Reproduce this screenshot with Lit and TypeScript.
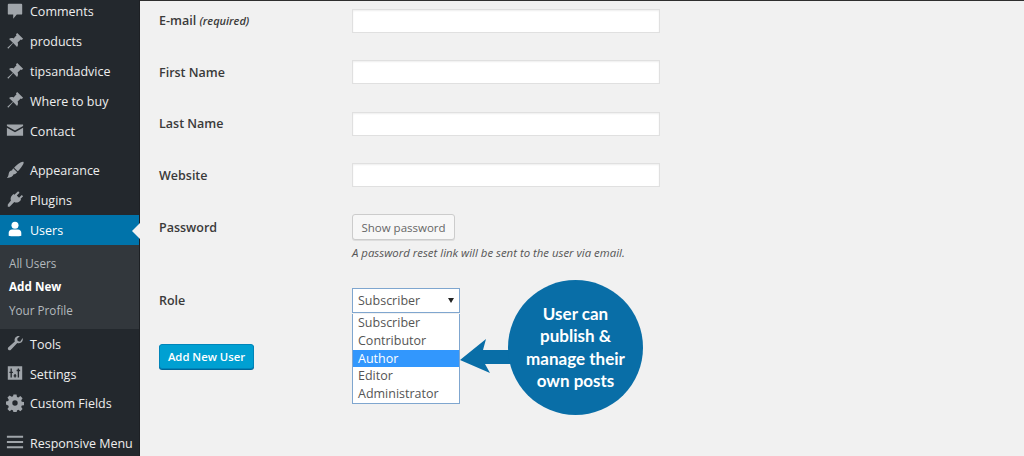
import { LitElement, html, css, svg } from "lit";
import { customElement } from "lit/decorators.js";

const pin = svg`<path d="M12.500 1l6.500 6.500-1.600 1.500-1-.7-3.500 3.300c.8 1.900.4 3.700-.6 5L8 12.300 2.500 18.500l-1-1L7.700 12 3.400 7.700c1.300-1 3.100-1.400 5-.6l3.300-3.500-.7-1z"/>`;
const icons: Record<string, unknown> = {
  comment: svg`<path d="M3 2h14a1 1 0 0 1 1 1v10a1 1 0 0 1-1 1h-5l-4 4.500V14H3a1 1 0 0 1-1-1V3a1 1 0 0 1 1-1z"/>`,
  pin,
  mail: svg`<path d="M1 4h18v1.500l-9 5-9-5z"/><path d="M1 7.500l9 5 9-5V16.500H1z"/>`,
  brush: svg`<path d="M19.500 1c.8 2-3.500 7.500-6.500 10.500L9 7.500c2.500-3.200 8.500-7.500 10.500-6.500z"/><path d="M8 8l4.500 4.500-1.500 1.500c-.8.900-1.700 1-2.500.7-.6 2-2.800 3.700-7.500 4.300 2.200-2 1.700-4.700 2.500-6.400.7-1.500 2.200-2.200 3.200-2 .2-.9.500-1.800 1.300-2.600z"/>`,
  plug: svg`<path d="M13.500 1.500l1.500 1.500-3 3 2.500 2.500 3-3 1.500 1.500-3 3 .8.800-1.300 1.300c-1.900 1.900-4.500 2.300-6.300 1.200L4 18.500H2v-2.500l3.500-4.200c-.8-1.800-.4-4.100 1.400-5.900l1.500-1.400.9.900z"/>`,
  user: svg`<circle cx="10" cy="5.800" r="3.900"/><path d="M3 17.500v-3.300c0-2 1.600-3.700 3.700-3.700h6.600c2.100 0 3.700 1.700 3.700 3.700v3.300c-2 .8-12 .8-14 0z"/>`,
  wrench: svg`<path d="M18.500 4.500c.6 2-.1 3.900-1.600 5-1.400 1-3 1.100-4.400.6L5.500 17.500c-.8.800-2.100.8-2.900 0-.8-.8-.7-2.100.1-2.900l7.100-6.300c-.5-1.400-.4-3 .6-4.400 1.100-1.500 3-2.200 5-1.600l-3 3 .6 2.600 2.700.8z"/>`,
  settings: svg`<path fill-rule="evenodd" d="M2 2.500h16v15H2zM5 5v3.500H3.800V10H5v5h1.500v-5h1.200V8.500H6.500V5zM13 5v1.500h-1.200V8H13v7h1.500V8h1.200V6.500h-1.200V5zM9.300 11v1.500H8.500V14h.8v1h1.500v-1h.7v-1.500h-.7V11z"/>`,
  gear: svg`<path fill-rule="evenodd" d="M8.300 .5h3.400l.5 2.700 1.500.6 2.300-1.500 2.400 2.400-1.500 2.300.6 1.500 2.500.5v3.400l-2.500.5-.6 1.500 1.500 2.300-2.400 2.400-2.300-1.500-1.500.6-.5 2.700H8.300l-.5-2.700-1.500-.6-2.300 1.500-2.400-2.400 1.500-2.300-.6-1.500L0 11.700V8.300l2.500-.5.6-1.500-1.500-2.300L4 1.600l2.300 1.500 1.500-.6zM10 7a3 3 0 1 0 0 6 3 3 0 0 0 0-6z"/>`,
  menu: svg`<path d="M1 3h18v2.400H1zM1 8.800h18v2.400H1zM1 14.600h18V17H1z"/>`,
};

@customElement("app-root")
export class AppRoot extends LitElement {
  static styles = css`
    :host { display: block; width: 1024px; height: 456px; overflow: hidden; font-family: "Open Sans", sans-serif; }
    .page { display: flex; width: 1024px; height: 456px; background: #f1f1f1; overflow: hidden; }
    .side { width: 139px; flex: none; background: #23282d; color: #eee; font-size: 12.500px; border-right: 1px solid #1d2024; }
    .list { margin-top: -3.500px; display: flex; flex-direction: column; }
    .item { height: 29.85px; display: flex; align-items: center; gap: 6px; padding-left: 6px; flex: none; white-space: nowrap; }
    .item svg { width: 18px; height: 18px; fill: #a0a5aa; flex: none; margin-top: -1px; }
    .item span { margin-top: 1px; }
    .sep { height: 9.500px; flex: none; }
    .active { background: #0073aa; color: #fff; position: relative; }
    .active svg { fill: #fff; }
    .active::after { content: ""; position: absolute; right: -1px; top: 8px; border: 8px solid transparent; border-right-color: #f1f1f1; border-left-width: 0; }
    .sub { background: #32373c; height: 84px; flex: none; display: flex; flex-direction: column; padding: 6px 0 0 9px; box-sizing: border-box; font-size: 11.700px; color: #b4b9be; }
    .sub div { height: 23.800px; display: flex; align-items: center; }
    .sub .cur { color: #fff; font-weight: 700; }
    .main { flex: 1; position: relative; padding: 7.200px 0 0 19px; border-top: 1px solid #2f2f2f; box-sizing: border-box; color: #3a3a3a; font-size: 12.500px; }
    .row { display: grid; grid-template-columns: 193px 308px; align-items: center; height: 25px; margin-bottom: 26.500px; font-weight: 600; }
    .row em { font-size: 11px; font-weight: 600; }
    .input { height: 24px; background: #fff; border: 1px solid #e0e0e0; box-sizing: border-box; box-shadow: inset 0 1px 2px rgba(0,0,0,.07); }
    .pw { display: grid; grid-template-columns: 193px 1fr; height: 52px; margin-bottom: 22.300px; margin-top: 1.500px; font-weight: 600; }
    .pw .lab { padding-top: 5px; }
    .show { width: 103px; height: 26px; box-sizing: border-box; border: 1px solid #ccc; border-radius: 3px; background: #f7f7f7; color: #666; font-weight: 400; font-size: 11.500px; display: flex; align-items: center; justify-content: center; box-shadow: 0 1px 0 #ddd; }
    .help { margin-top: 5px; font-size: 11.400px; font-style: italic; font-weight: 400; color: #555; white-space: nowrap; }
    .role { display: grid; grid-template-columns: 193px 108px; height: 25px; align-items: center; margin-bottom: 31px; font-weight: 600; }
    .sel { height: 25px; box-sizing: border-box; border: 1px solid #7fa6cf; background: #fff; display: flex; align-items: center; justify-content: space-between; padding: 0 5px; font-weight: 400; color: #555; font-size: 12.500px; }
    .caret { width: 0; height: 0; border: 3px solid transparent; border-top: 5px solid #222; border-bottom: 0; }
    .drop { position: absolute; left: 212px; top: 313px; width: 108px; box-sizing: border-box; border: 1px solid #7fa6cf; border-top: 0; background: #fff; font-weight: 400; color: #555; }
    .drop div { height: 17.800px; line-height: 17.800px; padding-left: 5px; }
    .drop .hl { background: #3297fd; color: #fff; }
    .btn { width: 95px; height: 25px; box-sizing: border-box; background: #00a0d2; border: 1px solid #0085ba; border-radius: 3px; color: #fff; font-weight: 600; font-size: 11.300px; display: flex; align-items: center; justify-content: center; box-shadow: 0 1px 0 #006799; }
    .callout { position: absolute; left: 299px; top: 279px; width: 204px; height: 136px; }
    .callout svg { position: absolute; left: 0; top: 0; }
    .bubble { position: absolute; left: 69px; top: 0; width: 135px; height: 135px; border-radius: 50%; background: #096ea7; color: #fff; display: flex; flex-direction: column; align-items: center; justify-content: center; font-family: "Lato", sans-serif; font-weight: 700; font-size: 17px; line-height: 22.300px; text-align: center; }
  `;

  private item(icon: string, text: string, active = false) {
    return html`<div class="item ${active ? "active" : ""}"><svg viewBox="0 0 20 20">${icons[icon]}</svg><span>${text}</span></div>`;
  }

  render() {
    return html`<div class="page">
      <nav class="side"><div class="list">
        ${this.item("comment", "Comments")}
        ${this.item("pin", "products")}
        ${this.item("pin", "tipsandadvice")}
        ${this.item("pin", "Where to buy")}
        ${this.item("mail", "Contact")}
        <div class="sep"></div>
        ${this.item("brush", "Appearance")}
        ${this.item("plug", "Plugins")}
        ${this.item("user", "Users", true)}
        <div class="sub"><div>All Users</div><div class="cur">Add New</div><div>Your Profile</div></div>
        ${this.item("wrench", "Tools")}
        ${this.item("settings", "Settings")}
        ${this.item("gear", "Custom Fields")}
        <div class="sep"></div>
        ${this.item("menu", "Responsive Menu")}
      </div></nav>
      <main class="main">
        <div class="row"><span>E-mail <em>(required)</em></span><div class="input"></div></div>
        <div class="row"><span>First Name</span><div class="input"></div></div>
        <div class="row"><span>Last Name</span><div class="input"></div></div>
        <div class="row"><span>Website</span><div class="input"></div></div>
        <div class="pw"><span class="lab">Password</span><div><div class="show">Show password</div><div class="help">A password reset link will be sent to the user via email.</div></div></div>
        <div class="role"><span>Role</span><div class="sel"><span>Subscriber</span><span class="caret"></span></div></div>
        <div class="btn">Add New User</div>
        <div class="drop"><div>Subscriber</div><div>Contributor</div><div class="hl">Author</div><div>Editor</div><div>Administrator</div></div>
        <div class="callout">
          <svg width="80" height="136" viewBox="0 0 80 136"><path d="M21 80L47 59l-3 11h31v14H46l5 9z" fill="#096ea7"/></svg>
          <div class="bubble"><span>User can</span><span>publish &amp;</span><span>manage their</span><span>own posts</span></div>
        </div>
      </main>
    </div>`;
  }
}
